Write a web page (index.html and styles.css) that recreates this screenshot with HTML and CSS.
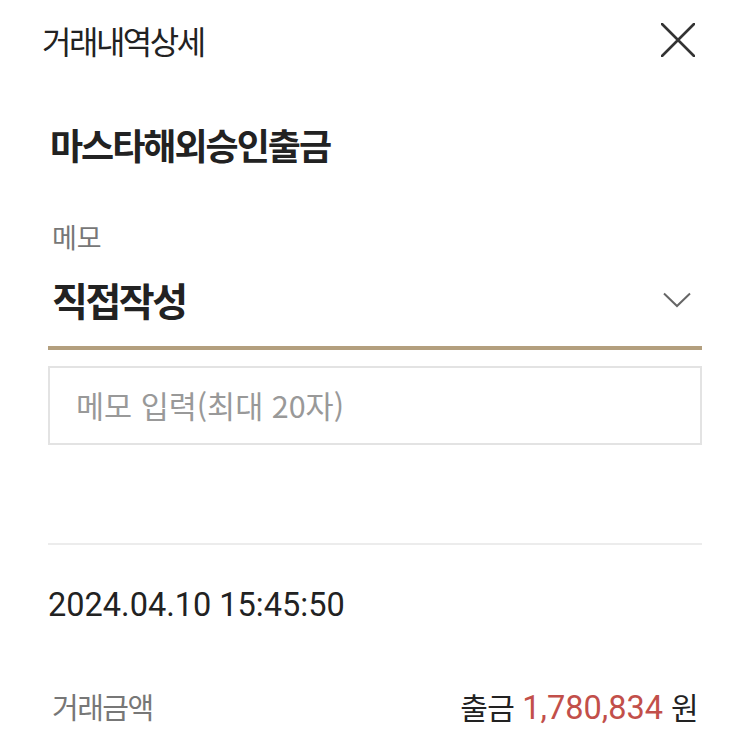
FILE: index.html
```html
<!DOCTYPE html>
<html lang="ko">
<head>
  <meta charset="UTF-8" />
  <meta name="viewport" content="width=device-width, initial-scale=1.0"/>
  <title>거래내역상세</title>
  <link rel="stylesheet" href="styles.css">
</head>
<body>

  <!-- HEADER -->
  <div class="header">
    <h1 class="header-title">거래내역상세</h1>
    <button class="close-btn" aria-label="닫기">
      <svg width="34" height="34" viewBox="0 0 34 34">
        <path d="M1 1 L33 33 M33 1 L1 33" stroke="#333" stroke-width="2.6" stroke-linecap="round" fill="none"/>
      </svg>
    </button>
  </div>

  <div class="content">
    <h2 class="subject">마스타해외승인출금</h2>

    <!-- MEMO -->
    <div class="field-label">메모</div>
    <div class="select">
      <span class="select-value">직접작성</span>
      <svg class="chevron" width="28" height="16" viewBox="0 0 28 16">
        <path d="M1 1.5 L14 14 L27 1.5" stroke="#666" stroke-width="2" fill="none"/>
      </svg>
    </div>
    <div class="memo-input">메모 입력(최대 20자)</div>

    <div class="divider"></div>

    <!-- DETAILS -->
    <div class="date">2024.04.10 15:45:50</div>
    <div class="row">
      <span class="row-label">거래금액</span>
      <span class="row-value">출금 <em class="amount">1,780,834</em> 원</span>
    </div>
  </div>

</body>
</html>
```

FILE: styles.css
```css
* {
  margin: 0; padding: 0;
  box-sizing: border-box;
}

body {
  background: #fff;
  color: #222;
  font-family: "Noto Sans CJK KR", "Noto Sans", sans-serif;
}

.header {
  display: flex;
  justify-content: space-between;
  align-items: center;
  height: 80px;
  padding: 0 55px 0 42px;
}

.header-title {
  font-size: 32px;
  font-weight: 400;
  letter-spacing: -2.5px;
  color: #222;
  line-height: 80px;
}

.close-btn {
  display: flex;
  background: transparent;
  border: none;
  cursor: pointer;
}

.content {
  padding: 0 48px;
}

.subject {
  margin-top: 39px;
  height: 50px;
  line-height: 50px;
  padding-left: 2px;
  font-size: 36px;
  font-weight: 700;
  letter-spacing: -2px;
  color: #222;
}

.field-label {
  margin-top: 53px;
  height: 30px;
  line-height: 30px;
  padding-left: 4px;
  font-size: 27px;
  color: #777;
}

.select {
  display: flex;
  justify-content: space-between;
  align-items: center;
  height: 98px;
  padding: 0 11px 0 4px;
  border-bottom: 4px solid #b39f7e;
}

.select-value {
  font-size: 39px;
  font-weight: 700;
  letter-spacing: -2.5px;
  color: #222;
}

.chevron {
  margin-top: 2px;
}

.memo-input {
  margin-top: 16px;
  height: 79px;
  line-height: 75px;
  padding-left: 26px;
  border: 2px solid #e3e3e3;
  font-size: 30.5px;
  color: #999;
}

.divider {
  margin-top: 98px;
  height: 2px;
  background: #ececec;
}

.date {
  margin-top: 40px;
  height: 40px;
  line-height: 40px;
  font-family: Roboto, "Noto Sans", sans-serif;
  font-size: 32.5px;
  color: #222;
}

.row {
  display: flex;
  justify-content: space-between;
  align-items: center;
  margin-top: 61px;
  height: 40px;
  padding: 0 4px 0 4px;
}

.row-label {
  font-size: 29px;
  letter-spacing: -1.5px;
  color: #777;
}

.row-value {
  font-size: 30px;
  letter-spacing: -0.5px;
  color: #222;
}

.amount {
  font-style: normal;
  font-family: Roboto, "Noto Sans", sans-serif;
  font-size: 32.5px;
  letter-spacing: 0;
  color: #c24f4a;
}
```
